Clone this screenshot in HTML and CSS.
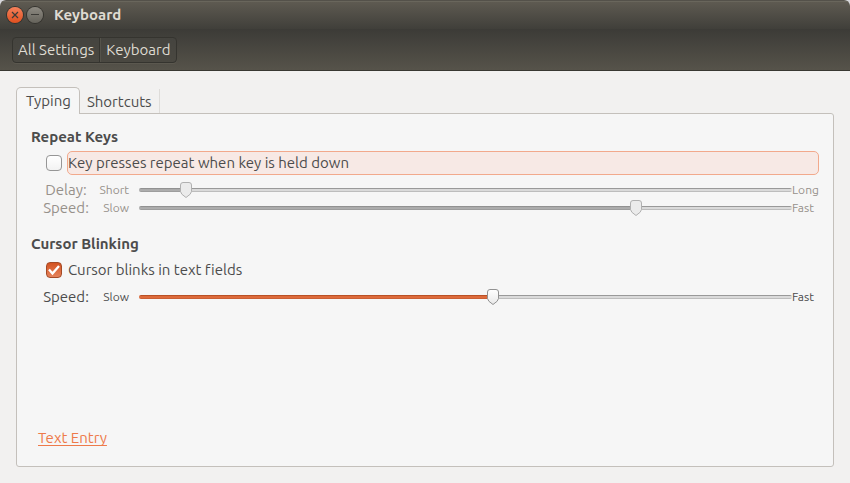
FILE: index.html
```html
<!DOCTYPE html>
<html lang="en">
<head>
<meta charset="utf-8">
<title>Keyboard</title>
<link rel="stylesheet" href="styles.css">
</head>
<body>
<div class="window">
  <header class="titlebar">
    <button class="winbtn close" aria-label="Close"><svg viewBox="0 0 16 16" width="16" height="16"><path d="M5 5l6 6M11 5l-6 6"/></svg></button>
    <button class="winbtn minimize" aria-label="Minimize"><svg viewBox="0 0 16 16" width="16" height="16"><path d="M4 7.500h8"/></svg></button>
    <h1>Keyboard</h1>
  </header>
  <nav class="toolbar">
    <div class="crumbs">
      <button>All Settings</button>
      <button>Keyboard</button>
    </div>
  </nav>
  <main>
    <div class="tabs" role="tablist">
      <button class="tab active" role="tab" aria-selected="true">Typing</button>
      <button class="tab" role="tab" aria-selected="false">Shortcuts</button>
    </div>
    <div class="panel" role="tabpanel">
      <section>
        <h2>Repeat Keys</h2>
        <div class="check">
          <input type="checkbox" id="repeat">
          <label for="repeat" class="focused">Key presses repeat when key is held down</label>
        </div>
        <div class="sliders disabled">
          <label for="delay">Delay:</label><span class="low">Short</span>
          <input type="range" id="delay" min="0" max="1000" value="64" disabled style="--fill:7%">
          <span class="high">Long</span>
          <label for="rate">Speed:</label><span class="low">Slow</span>
          <input type="range" id="rate" min="0" max="1000" value="766" disabled style="--fill:76%">
          <span class="high">Fast</span>
        </div>
      </section>
      <section>
        <h2>Cursor Blinking</h2>
        <div class="check">
          <input type="checkbox" id="blink" checked>
          <label for="blink">Cursor blinks in text fields</label>
        </div>
        <div class="sliders">
          <label for="blink-speed">Speed:</label><span class="low">Slow</span>
          <input type="range" id="blink-speed" min="0" max="1000" value="543" style="--fill:54%">
          <span class="high">Fast</span>
        </div>
      </section>
      <a class="entry" href="#text-entry">Text Entry</a>
    </div>
  </main>
</div>
</body>
</html>
```
FILE: styles.css
```css
* { box-sizing: border-box; }

body {
  margin: 0;
  background: #d8d8dc;
  color: #4c4c4c;
  font: 15px/20px "Ubuntu", "Noto Sans", sans-serif;
  font-variant-ligatures: none;
}

button {
  margin: 0;
  border: 0;
  padding: 0;
  background: none;
  color: inherit;
  font: inherit;
}

h1, h2 { margin: 0; font-size: 15px; line-height: 20px; }

.window {
  display: flex;
  flex-direction: column;
  min-height: 100vh;
  border-radius: 6px 6px 0 0;
  overflow: hidden;
  background: #f2f1f0;
}

.titlebar {
  display: flex;
  align-items: center;
  gap: 4px;
  height: 29px;
  padding: 0 7px;
  border-top: 1px solid #54514a;
  background: linear-gradient(#5f5b52, #403f3a);
  box-shadow: inset 0 1px #69665c;
  color: #dfdbd2;
}

.titlebar h1 { margin-left: 7px; }

.winbtn {
  width: 16px;
  height: 16px;
  border-radius: 50%;
  box-shadow: 0 0 0 1px #34332e;
}

.winbtn svg { display: block; fill: none; stroke: #3c3b37; stroke-width: 1.2; }
.close { background: linear-gradient(#f5815b, #e0501f); }
.minimize { background: linear-gradient(#8d8a82, #65635b); }

.toolbar {
  height: 42px;
  padding: 8px 12px;
  border-bottom: 1px solid #393832;
  background: linear-gradient(#3c3b37, #56534a);
  color: #dfdbd2;
}

.crumbs {
  display: inline-flex;
  border: 1px solid #35342f;
  border-radius: 4px;
  background: linear-gradient(#45443f, #4a4841);
  box-shadow: 0 1px #5b584f;
}

.crumbs button { height: 24px; padding: 0 5px; }
.crumbs button + button { padding: 0 6px; border-left: 1px solid #35342f; box-shadow: inset 1px 0 #55534b; }

main {
  display: flex;
  flex: 1;
  flex-direction: column;
  padding: 16px;
}

.tabs { display: flex; align-items: flex-end; }

.tab {
  height: 24px;
  padding: 2px 7px 0;
  border-right: 1px solid #dedcd9;
}

.tab.active {
  z-index: 1;
  height: 27px;
  margin-bottom: -1px;
  padding: 0 8px 0 9px;
  border: 1px solid #c4c0bb;
  border-bottom: 0;
  border-radius: 5px 5px 0 0;
  background: #f6f6f6;
}

.panel {
  display: flex;
  flex: 1;
  flex-direction: column;
  gap: 17px;
  padding: 13px 14px 18px;
  border: 1px solid #c4c0bb;
  border-radius: 0 3px 3px 3px;
  background: #f6f6f6;
}

.check {
  display: flex;
  align-items: center;
  gap: 5px;
  margin: 4px 0 6px;
  padding-left: 15px;
}

.check label {
  flex: 1;
  height: 24px;
  border: 1px solid transparent;
  border-radius: 5px;
  line-height: 22px;
}

.check .focused { border-color: #f2a98c; background: #f7e9e5; }

.check input {
  appearance: none;
  width: 16px;
  height: 16px;
  margin: 0;
  border: 1px solid #969696;
  border-radius: 4px;
  background: linear-gradient(#fff, #f2f2f2);
}

.check input:checked {
  border-color: #a44a26;
  background:
    url("data:image/svg+xml,%3Csvg xmlns='http://www.w3.org/2000/svg' viewBox='0 0 14 14'%3E%3Cpath d='M2 6.500l3.500 4L12 3' fill='none' stroke='white' stroke-width='2.300'/%3E%3C/svg%3E") center / 14px,
    linear-gradient(#d35220, #e5835c);
}

.sliders {
  display: grid;
  grid-template-columns: 46px 40px 1fr 27px;
  grid-auto-rows: 18px;
  align-items: center;
  padding-left: 12px;
  line-height: 18px;
}

.sliders label { text-align: center; white-space: nowrap; }
.sliders span { font-size: 12px; }
.sliders.disabled { color: #96918b; }
.low { text-align: right; }

.sliders input {
  --bar: linear-gradient(#a8441b, #e06c3c 40%, #dd6b3d 70%, #c0572d);
  --thumb: url("data:image/svg+xml,%3Csvg xmlns='http://www.w3.org/2000/svg' viewBox='0 0 12 16'%3E%3ClinearGradient id='g' x2='0' y2='1'%3E%3Cstop stop-color='%23fff'/%3E%3Cstop offset='1' stop-color='%23e8e8e8'/%3E%3C/linearGradient%3E%3Cpath d='M3 .5H9Q11.500 .5 11.500 3V9.500Q11.500 12 6 15.500Q.5 12 .5 9.500V3Q.5 .5 3 .5Z' fill='url(%23g)' stroke='%23929292'/%3E%3C/svg%3E");
  appearance: none;
  width: auto;
  min-width: 0;
  height: 16px;
  margin: 0 0 0 10px;
  background: none;
}

.sliders input:disabled {
  --bar: linear-gradient(#858585, #adadad 40%, #adadad 70%, #929292);
  --thumb: url("data:image/svg+xml,%3Csvg xmlns='http://www.w3.org/2000/svg' viewBox='0 0 12 16'%3E%3Cpath d='M3 .5H9Q11.500 .5 11.500 3V9.500Q11.500 12 6 15.500Q.5 12 .5 9.500V3Q.5 .5 3 .5Z' fill='%23ebebeb' stroke='%23b0b0b0'/%3E%3C/svg%3E");
}

.sliders input::-webkit-slider-runnable-track {
  height: 4px;
  border-radius: 2px;
  background:
    var(--bar) left / var(--fill) 100% no-repeat,
    linear-gradient(#999 25%, #dadada 25%, #dadada 75%, #bdbdbd 75%);
}

.sliders input::-webkit-slider-thumb {
  appearance: none;
  width: 12px;
  height: 16px;
  margin-top: -6px;
  background: var(--thumb) center / 12px 16px no-repeat;
}

.entry {
  align-self: flex-start;
  margin: auto 0 0 7px;
  color: #ee7a4a;
  text-underline-offset: 2px;
  text-decoration-skip-ink: none;
}
```
